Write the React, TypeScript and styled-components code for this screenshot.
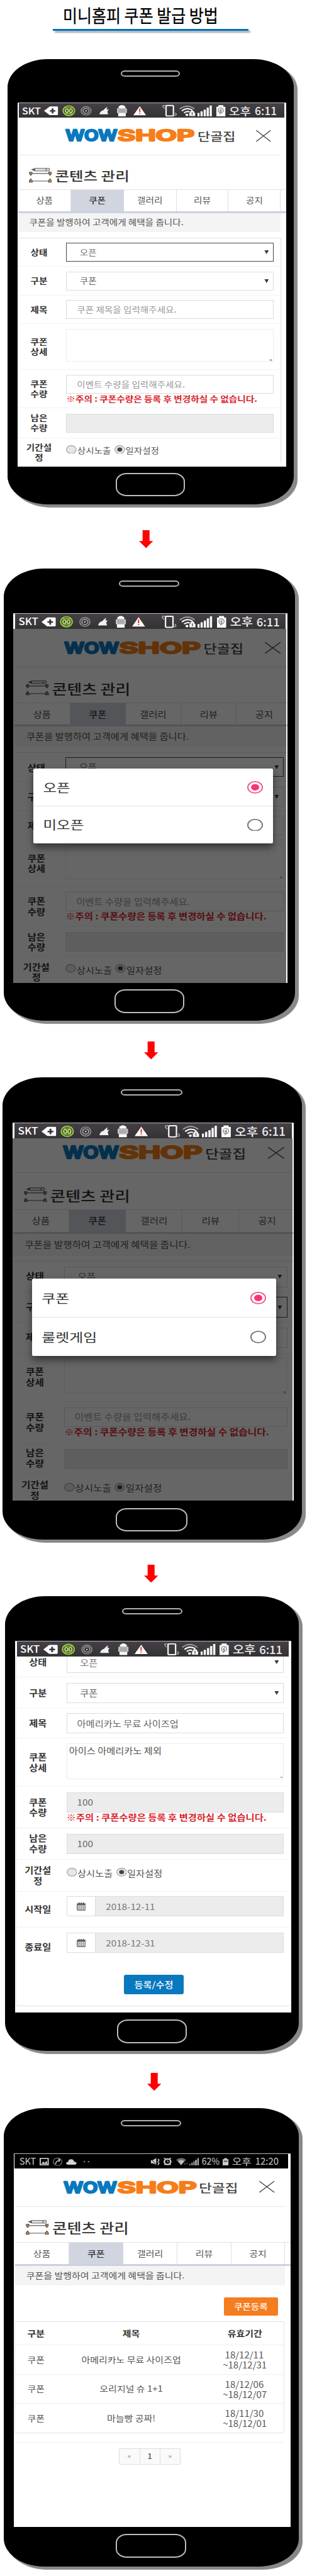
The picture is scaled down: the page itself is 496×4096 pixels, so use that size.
import React from "react";
import styled, { createGlobalStyle, ThemeProvider, css } from "styled-components";

/* ---------- base ---------- */

const Global = createGlobalStyle`
  * { box-sizing: border-box; }
  html, body { margin: 0; padding: 0; background: #fff; }
  body { font-family: "Noto Sans CJK KR", "Noto Sans", sans-serif; color: #444; overflow-x: hidden; }
  svg { display: block; flex: none; }
`;

const Page = styled.main`
  width: 652px;
  height: 5386px;
  zoom: 0.7605;
  display: flex;
  flex-direction: column;
  align-items: flex-start;
  overflow: hidden;
`;

type TextProps = { $size?: number; $sy?: number; $weight?: number; $color?: string; $line?: number };

const Text = styled.div<TextProps>`
  font-size: ${(p) => (p.$size ?? 1) * (p.theme as any).k}px;
  font-weight: ${(p) => p.$weight ?? 400};
  color: ${(p) => p.$color ?? "#555"};
  line-height: ${(p) => p.$line ?? 22}px;
  white-space: nowrap;
  transform: scaleY(${(p) => p.$sy ?? 0.87});
`;

/* ---------- title ---------- */

const TitleBlock = styled.header`
  height: 66px;
  flex: none;
  padding: 6px 0 0 110px;
`;
const Title = styled.h1`
  margin: 0 0 0 22px;
  width: max-content;
  font-size: 38px;
  line-height: 48px;
  font-weight: 400;
  color: #000;
  -webkit-text-stroke: 0.4px #000;
  white-space: nowrap;
  transform: scaleX(0.866);
  transform-origin: left center;
`;
const TitleRule = styled.div`
  width: 409px;
  height: 4px;
  margin-top: 6px;
  background: #0070c0;
  box-shadow: 4px 4px 3px rgba(0, 0, 0, 0.35);
`;

/* ---------- phone frame ---------- */

type Box = [left: number, right: number, top: number, bottom: number];

const Body = styled.section<{ $x: number; $w: number; $h: number; $mt: number }>`
  flex: none;
  margin-left: ${(p) => p.$x}px;
  margin-top: ${(p) => p.$mt}px;
  width: ${(p) => p.$w}px;
  height: ${(p) => p.$h}px;
  background: #000;
  border-radius: 84px / 59px;
  box-shadow: 7px 6px 1px #888;
  display: flex;
  flex-direction: column;
  align-items: flex-start;
`;
const Part = css<{ $x: number; $w: number; $h: number; $mt: number }>`
  flex: none;
  margin-left: ${(p) => p.$x}px;
  margin-top: ${(p) => p.$mt}px;
  width: ${(p) => p.$w}px;
  height: ${(p) => p.$h}px;
`;
const Earpiece = styled.div<{ $x: number; $w: number; $h: number; $mt: number }>`
  ${Part}
  border: 3px solid #b0b0b0;
  border-radius: 9px / 7px;
`;
const HomeButton = styled.div<{ $x: number; $w: number; $h: number; $mt: number }>`
  ${Part}
  border: 3px solid #bdbdbd;
  border-radius: 23px / 18px;
`;
const Screen = styled.div<{ $x: number; $w: number; $h: number; $mt: number }>`
  ${Part}
  position: relative;
  overflow: hidden;
  background: #fff;
  border-top: 2px solid #bdb9bd;
`;

interface PhoneSpec {
  prev: number;
  body: Box;
  ear: Box;
  screen: Box;
  home: Box;
  k: number;
}

const part = (b: Box, left: number, above: number) => ({
  $x: b[0] - left,
  $w: b[1] - b[0],
  $h: b[3] - b[2],
  $mt: b[2] - above,
});

function Phone({ spec, children }: { spec: PhoneSpec; children: React.ReactNode }) {
  const { body, ear, screen, home, prev, k } = spec;
  return (
    <ThemeProvider theme={{ k }}>
      <Body {...part(body, 0, prev)}>
        <Earpiece {...part(ear, body[0], body[2])} />
        <Screen {...part(screen, body[0], ear[3])}>{children}</Screen>
        <HomeButton {...part(home, body[0], screen[3])} />
      </Body>
    </ThemeProvider>
  );
}

const ArrowWrap = styled.div<{ $x: number; $mt: number }>`
  flex: none;
  margin-left: ${(p) => p.$x}px;
  margin-top: ${(p) => p.$mt}px;
`;
function Arrow({ x, mt, h = 37.5 }: { x: number; mt: number; h?: number }) {
  return (
    <ArrowWrap $x={x} $mt={mt}>
      <svg width="29.5" height={h} viewBox="0 0 71 104" preserveAspectRatio="none">
        <path d="M18 0H53V63H71L35.5 104L0 63H18Z" fill="#ff0000" />
      </svg>
    </ArrowWrap>
  );
}

/* ---------- status bar ---------- */

const Bar = styled.div<{ $ml: number; $w: number; $h: number; $dark?: boolean }>`
  margin-left: ${(p) => p.$ml}px;
  width: ${(p) => p.$w}px;
  height: ${(p) => p.$h}px;
  display: flex;
  align-items: stretch;
  background: ${(p) => (p.$dark ? "#000" : "linear-gradient(#444045, #353236)")};
`;
const Slot = styled.div<{ $gap: number; $w: number; $of: number }>`
  flex: 0 0 ${(p) => (p.$w / p.$of) * 100}%;
  margin-left: ${(p) => (p.$gap / p.$of) * 100}%;
  display: flex;
  align-items: center;
  svg { width: 100%; height: 100%; overflow: visible; }
`;
const Glyph = ({ w, children }: { w: number; children: React.ReactNode }) => (
  <svg viewBox={`0 0 ${w} 85`} preserveAspectRatio="none">{children}</svg>
);

function StatusBar({ ml, w, h }: { ml: number; w: number; h: number }) {
  const n = 1334;
  return (
    <Bar $ml={ml} $w={w} $h={h}>
      <Slot $gap={17} $w={92} $of={n}>
        <Text $size={1.1} $weight={500} $color="#fff" $sy={0.9}>SKT</Text>
      </Slot>
      <Slot $gap={17} $w={70} $of={n}>
        <Glyph w={70}>
          <path d="M0 46L26 22Q28 20 32 20H66Q70 20 70 24V67Q70 71 66 71H32Q28 71 26 69Z" fill="#fff" />
          <path d="M43 31V61M29 46H57" stroke="#3a373b" strokeWidth="9" />
        </Glyph>
      </Slot>
      <Slot $gap={20} $w={67} $of={n}>
        <Glyph w={67}>
          <circle cx="33" cy="45" r="29" fill="#4c5a33" stroke="#9bd137" strokeWidth="6" />
          <path d="M14 27H52M14 63H52" stroke="#9bd137" strokeWidth="4" />
          <ellipse cx="23" cy="45" rx="7" ry="11" fill="none" stroke="#c6e88a" strokeWidth="5" />
          <ellipse cx="43" cy="45" rx="7" ry="11" fill="none" stroke="#c6e88a" strokeWidth="5" />
        </Glyph>
      </Slot>
      <Slot $gap={27} $w={56} $of={n}>
        <Glyph w={56}>
          <circle cx="28" cy="46" r="25" fill="none" stroke="#a9a7a9" strokeWidth="4" />
          <circle cx="28" cy="46" r="15" fill="none" stroke="#a9a7a9" strokeWidth="5" />
          <circle cx="28" cy="46" r="4" fill="#ddd" />
        </Glyph>
      </Slot>
      <Slot $gap={38} $w={47} $of={n}>
        <Glyph w={47}>
          <path d="M0 66Q4 46 20 42L28 32L40 22L36 38L47 36L40 50L44 66Z" fill="#f0f0f0" />
        </Glyph>
      </Slot>
      <Slot $gap={41} $w={50} $of={n}>
        <Glyph w={50}>
          <path d="M8 30V20Q8 17 14 17L18 12H32L36 17Q42 17 42 20V30ZM6 60H44V78H6Z" fill="#fff" />
          <rect x="0" y="30" width="50" height="30" rx="5" fill="#c4c4c4" />
          <path d="M8 38H42M8 45H42M8 52H42" stroke="#8d8d8d" strokeWidth="3" />
        </Glyph>
      </Slot>
      <Slot $gap={31} $w={64} $of={n}>
        <Glyph w={64}>
          <path d="M32 19L64 72H0Z" fill="#fff" />
          <path d="M32 32V53M32 58V64" stroke="#f0442c" strokeWidth="7" />
        </Glyph>
      </Slot>
      <Slot $gap={82} $w={72} $of={n}>
        <Glyph w={72}>
          <rect x="19" y="14" width="37" height="62" rx="5" fill="none" stroke="#f4f4f4" strokeWidth="7" />
          <path d="M12 32Q0 22 4 14H16M60 72Q72 76 70 64L64 58" fill="none" stroke="#aaa" strokeWidth="5" />
        </Glyph>
      </Slot>
      <Slot $gap={14} $w={84} $of={n}>
        <Glyph w={84}>
          <path d="M3 34Q40 2 76 34" fill="none" stroke="#aaa" strokeWidth="6" />
          <path d="M13 46Q40 22 66 42" fill="none" stroke="#fff" strokeWidth="7" />
          <path d="M24 58Q38 45 52 52" fill="none" stroke="#fff" strokeWidth="7" />
          <circle cx="38" cy="69" r="7" fill="#fff" />
          <path d="M50 76V57H55V50Q65 36 75 50V57H80V76Z" fill="#f4f4f4" />
          <path d="M65 54V70" stroke="#666" strokeWidth="5" />
        </Glyph>
      </Slot>
      <Slot $gap={7} $w={72} $of={n}>
        <Glyph w={72}>
          <path d="M0 78V58H10V78ZM15 78V48H26V78ZM31 78V38H42V78ZM46 78V26H57V78ZM61 78V14H72V78Z" fill="#f6f6f6" />
        </Glyph>
      </Slot>
      <Slot $gap={23} $w={45} $of={n}>
        <Glyph w={45}>
          <path d="M0 21H10V12H35V21H45V78H0Z" fill="#fff" />
          <ellipse cx="22" cy="43" rx="13" ry="15" fill="none" stroke="#777" strokeWidth="4" />
          <path d="M26 34L17 46H25L17 66" fill="none" stroke="#777" strokeWidth="4" />
        </Glyph>
      </Slot>
      <Slot $gap={19} $w={113} $of={n}>
        <Text $size={1.3} $weight={500} $color="#eee" $sy={0.85}>오후</Text>
      </Slot>
      <Slot $gap={17} $w={116} $of={n}>
        <Text $size={1.2} $weight={500} $color="#eee" $sy={0.98}>6:11</Text>
      </Slot>
    </Bar>
  );
}

function NightStatusBar({ ml, w, h }: { ml: number; w: number; h: number }) {
  const n = 1376;
  return (
    <Bar $ml={ml} $w={w} $h={h} $dark>
      <Slot $gap={26} $w={80} $of={n}>
        <Text $size={0.96} $color="#ccc" $sy={1.02}>SKT</Text>
      </Slot>
      <Slot $gap={17} $w={46} $of={n}>
        <Glyph w={46}>
          <rect x="3" y="26" width="40" height="37" fill="none" stroke="#ccc" strokeWidth="6" />
          <path d="M8 58L18 44L26 52L34 40L40 58Z" fill="#ccc" />
        </Glyph>
      </Slot>
      <Slot $gap={21} $w={49} $of={n}>
        <Glyph w={49}>
          <circle cx="24" cy="45" r="22" fill="none" stroke="#777" strokeWidth="4" />
          <path d="M14 60Q14 40 34 36M26 28L36 34L30 46" fill="none" stroke="#ccc" strokeWidth="5" />
        </Glyph>
      </Slot>
      <Slot $gap={17} $w={53} $of={n}>
        <Glyph w={53}>
          <path d="M8 62Q0 60 0 54Q2 46 10 46Q12 30 26 30Q38 30 40 44Q53 46 53 55Q52 61 44 62Z" fill="#d4d4d4" />
        </Glyph>
      </Slot>
      <Slot $gap={36} $w={30} $of={n}>
        <Glyph w={30}>
          <circle cx="4" cy="45" r="4" fill="#999" />
          <circle cx="25" cy="45" r="4" fill="#999" />
        </Glyph>
      </Slot>
      <Slot $gap={307} $w={49} $of={n}>
        <Glyph w={49}>
          <path d="M3 36H12L30 24V64L12 54H3Z" fill="#ccc" />
          <path d="M2 26L32 66" stroke="#000" strokeWidth="3" />
          <path d="M38 28L44 36L38 46L44 54L38 64" fill="none" stroke="#ccc" strokeWidth="5" />
        </Glyph>
      </Slot>
      <Slot $gap={17} $w={40} $of={n}>
        <Glyph w={40}>
          <path d="M2 26H10M30 26H38M4 64L10 58M36 64L30 58" stroke="#ccc" strokeWidth="6" />
          <circle cx="20" cy="45" r="16" fill="none" stroke="#ccc" strokeWidth="8" />
          <path d="M20 36V46H28" fill="none" stroke="#ccc" strokeWidth="3" />
        </Glyph>
      </Slot>
      <Slot $gap={23} $w={54} $of={n}>
        <Glyph w={54}>
          <path d="M0 34Q26 12 50 34L25 66Z" fill="#6c6c6c" />
          <path d="M10 42Q26 28 41 42L25 64Z" fill="#bbb" />
          <path d="M44 52V62M54 50V60" stroke="#666" strokeWidth="4" />
        </Glyph>
      </Slot>
      <Slot $gap={13} $w={47} $of={n}>
        <Glyph w={47}>
          <path d="M0 66V58H6V66ZM10 66V50H17V66ZM20 66V42H27V66Z" fill="#999" />
          <path d="M30 66V34H37V66ZM41 66V24H47V66Z" fill="#ccc" />
        </Glyph>
      </Slot>
      <Slot $gap={15} $w={92} $of={n}>
        <Text $size={0.93} $color="#ccc" $sy={1.08}>62%</Text>
      </Slot>
      <Slot $gap={14} $w={29} $of={n}>
        <Glyph w={29}>
          <path d="M0 30H8V24H21V30H29V66H0Z" fill="#ccc" />
          <path d="M5 42H24" stroke="#444" strokeWidth="6" />
        </Glyph>
      </Slot>
      <Slot $gap={18} $w={96} $of={n}>
        <Text $size={1.11} $color="#ccc" $sy={0.84}>오후</Text>
      </Slot>
      <Slot $gap={19} $w={122} $of={n}>
        <Text $size={1} $color="#ccc" $sy={1.02}>12:20</Text>
      </Slot>
    </Bar>
  );
}

/* ---------- site header, heading, tabs ---------- */

const SiteHeader = styled.div<{ $h: number; $pb: number; $w: number }>`
  height: ${(p) => p.$h}px;
  width: ${(p) => p.$w}px;
  padding-bottom: ${(p) => p.$pb}px;
  border-bottom: 2px solid #e6e6e6;
  display: flex;
  align-items: center;
`;
const LogoCell = styled.div<{ $ml: number; $w: number; $h: number; $drop?: number }>`
  flex: none;
  margin-left: ${(p) => p.$ml}px;
  width: ${(p) => p.$w}px;
  height: ${(p) => p.$h}px;
  display: flex;
  align-items: center;
  padding-top: ${(p) => p.$drop ?? 0}px;
  svg { width: 100%; height: 100%; overflow: visible; }
`;

function Logo() {
  const letters = {
    fontFamily: "Inter, sans-serif",
    fontSize: 90,
    fontWeight: 600,
    strokeWidth: 9,
    strokeLinejoin: "round" as const,
    lengthAdjust: "spacingAndGlyphs",
  };
  return (
    <svg viewBox="0 0 643 79" preserveAspectRatio="none">
      <text x="1" y="72" textLength="259" fill="#0a78be" stroke="#0a78be" {...letters}>WOW</text>
      <text x="262" y="72" textLength="386" fill="#f67d18" stroke="#f67d18" {...letters}>SHOP</text>
    </svg>
  );
}

const HeadingRow = styled.div<{ $h: number; $pl: number; $drop: number }>`
  height: ${(p) => p.$h}px;
  padding: ${(p) => p.$drop}px 0 0 ${(p) => p.$pl}px;
  display: flex;
  align-items: flex-start;
  gap: 7px;
`;

const ContentIcon = () => (
  <svg width="48" height="31" viewBox="0 0 112 86" preserveAspectRatio="none">
    <path d="M14 10L30 2H98Q102 10 98 18H30Z" fill="#d9d9d9" stroke="#777" strokeWidth="4" />
    <path d="M14 10L30 3V17Z" fill="#555" />
    <path d="M84 2V18" stroke="#777" strokeWidth="5" />
    <path d="M10 32H102M10 76H102" stroke="#777" strokeWidth="5" />
    <g fill="#c98a4a" stroke="#555" strokeWidth="4">
      <path d="M3 25H15V35L9 43L3 35Z" />
      <path d="M97 25H109V35L103 43L97 35Z" />
      <path d="M9 64L16 74V83H2V74Z" />
      <path d="M103 64L110 74V83H96V74Z" />
    </g>
  </svg>
);

const Tabs = styled.nav<{ $cols: string; $h: number }>`
  display: grid;
  grid-template-columns: ${(p) => p.$cols};
  height: ${(p) => p.$h}px;
  border-top: 1.5px solid #e2e2e2;
  border-bottom: 4px solid #ccd1df;
`;
const Tab = styled.div<{ $on?: boolean }>`
  display: flex;
  align-items: center;
  justify-content: center;
  border-right: 1.5px solid ${(p) => (p.$on ? "#d0d5df" : "#e0e0e0")};
  background: ${(p) => (p.$on ? "#d0d5df" : "#fff")};
`;
const Notice = styled.div<{ $h: number; $w: number; $pl: number }>`
  height: ${(p) => p.$h}px;
  width: ${(p) => p.$w}px;
  padding: 0 0 1px ${(p) => p.$pl}px;
  display: flex;
  align-items: center;
  background: #f4f4f4;
`;

interface TopSpec {
  left: number;
  barBottom: number;
  logo: [number, number];
  logoH: number;
  name: number;
  close: [number, number];
  pb: number;
  rule: number;
  right: number;
  icon: [number, number];
  tabs: number[];
  tabTop: number;
  tabBottom: number;
  noticeBottom: number;
  noticeX: number;
}

const TAB_NAMES = ["상품", "쿠폰", "갤러리", "리뷰", "공지"];

const Pad = styled.div<{ $ml: number }>`
  padding-left: ${(p) => p.$ml}px;
`;

function PageTop({ t, screenX }: { t: TopSpec; screenX: number }) {
  const cols = t.tabs.slice(1).map((x, i) => `${x - t.tabs[i]}px`).join(" ");
  return (
    <Pad $ml={t.left - screenX}>
      <SiteHeader $h={t.rule - t.barBottom + 1} $pb={t.pb} $w={t.right - t.left}>
        <LogoCell $ml={t.logo[0] - t.left} $w={t.logo[1] - t.logo[0]} $h={t.logoH}>
          <Logo />
        </LogoCell>
        <LogoCell $ml={t.name - t.logo[1] - 1} $w={80} $h={30} $drop={3}>
          <Text $size={1.5} $weight={500} $color="#444" $sy={0.82} $line={30}>단골집</Text>
        </LogoCell>
        <LogoCell $ml={t.close[0] - t.name - 79} $w={t.close[1] - t.close[0]} $h={24}>
          <svg viewBox="0 0 75 68" preserveAspectRatio="none">
            <path d="M1 1L74 67M74 1L1 67" stroke="#444" strokeWidth="4" />
          </svg>
        </LogoCell>
      </SiteHeader>
      <HeadingRow $h={t.tabTop - t.rule - 1} $pl={t.icon[0] - t.left} $drop={t.icon[1] - t.rule}>
        <ContentIcon />
        <Text $size={1.68} $weight={500} $color="#333" $sy={0.84} $line={34}>콘텐츠 관리</Text>
      </HeadingRow>
      <Tabs $cols={cols} $h={t.tabBottom - t.tabTop}>
        {TAB_NAMES.map((n, i) => (
          <Tab key={n} $on={i === 1}>
            <Text $weight={i === 1 ? 500 : 400} $color={i === 1 ? "#333" : "#555"}>{n}</Text>
          </Tab>
        ))}
      </Tabs>
      <Notice $h={t.noticeBottom - t.tabBottom} $w={t.right - t.left} $pl={t.noticeX - t.left}>
        <Text $color="#555">쿠폰을 발행하여 고객에게 혜택을 줍니다.</Text>
      </Notice>
    </Pad>
  );
}

/* ---------- form ---------- */

const FormBox = styled.div<{ $ml: number; $mt: number; $w: number; $h: number; $side?: boolean; $noTop?: boolean; $foot?: boolean }>`
  margin-left: ${(p) => p.$ml}px;
  margin-top: ${(p) => p.$mt}px;
  width: ${(p) => p.$w}px;
  height: ${(p) => p.$h}px;
  border: 0 solid #e2e2e2;
  border-top-width: ${(p) => (p.$noTop ? 0 : 2)}px;
  border-right-width: ${(p) => (p.$side ? 2 : 0)}px;
  border-bottom-width: ${(p) => (p.$foot ? 2 : 0)}px;
  ${(p) => p.$foot && "border-left-width: 1px; border-radius: 0 0 4px 4px;"}
`;
const Row = styled.div<{ $h: number; $cols: string; $line?: boolean }>`
  display: grid;
  grid-template-columns: ${(p) => p.$cols};
  height: ${(p) => p.$h}px;
  border-bottom: ${(p) => (p.$line === false ? 0 : 1.5)}px solid #f2f2f2;
`;
const Label = styled.div`
  display: flex;
  flex-direction: column;
  align-items: center;
  justify-content: center;
`;
const Cell = styled.div<{ $pt: number }>`
  grid-column: 3;
  padding-top: ${(p) => p.$pt}px;
`;
const Field = styled.div<{ $h: number; $pl?: number; $tone?: "focus" | "soft" | "off" }>`
  height: ${(p) => p.$h}px;
  padding: 0 9px 0 ${(p) => p.$pl ?? 21}px;
  border: 1.5px solid
    ${(p) => (p.$tone === "focus" ? "#484848" : p.$tone === "soft" ? "#ececec" : "#d8dce0")};
  background: ${(p) => (p.$tone === "off" ? "#ececec" : "#fff")};
  display: flex;
  align-items: center;
  justify-content: space-between;
`;
const Area = styled(Field)`
  position: relative;
  align-items: flex-start;
  padding-top: 3px;
  &::after {
    content: "";
    position: absolute;
    right: 2px;
    bottom: 1px;
    width: 4px;
    height: 3px;
    background: #aaa;
  }
`;
const DateField = styled.div<{ $h: number }>`
  height: ${(p) => p.$h}px;
  display: grid;
  grid-template-columns: 60px 1fr;
  border: 1.5px solid #d8dce4;
`;
const DateIcon = styled.div`
  display: flex;
  align-items: center;
  justify-content: center;
  border-right: 1.5px solid #d8dce4;
`;
const DateValue = styled.div`
  display: flex;
  align-items: center;
  padding-left: 21px;
  background: #ececec;
`;
const Choices = styled.div`
  display: flex;
  align-items: center;
  height: 26px;
`;
const ChoiceText = styled.div<{ $mr?: number }>`
  margin: 5px ${(p) => p.$mr ?? 0}px 0 1px;
`;

const Caret = () => (
  <svg width="10" height="8" viewBox="0 0 10 8">
    <path d="M0.5 0H9.5L5 8Z" fill="#3a3a3a" />
  </svg>
);
const Calendar = () => (
  <svg width="19" height="17" viewBox="0 0 46 48" preserveAspectRatio="none">
    <rect x="2" y="7" width="42" height="39" rx="4" fill="#ddd" stroke="#666" strokeWidth="4" />
    <path d="M2 7H44V17H2Z" fill="#666" />
    <path d="M12 0V12M23 0V12M34 0V12" stroke="#555" strokeWidth="5" />
    <path d="M12 18V46M23 18V46M34 18V46M3 27H43M3 37H43" stroke="#888" strokeWidth="2.5" />
  </svg>
);
const SmallRadio = ({ on }: { on?: boolean }) => (
  <svg width="22" height="18" viewBox="0 0 52 42" preserveAspectRatio="none">
    <ellipse cx="26" cy="21" rx="24" ry="19.5" fill="#e6e6e6" stroke="#999" strokeWidth="3.5" />
    {on && <ellipse cx="26" cy="21" rx="12" ry="10" fill="#444" />}
  </svg>
);

const LabelText = ({ lines, line }: { lines: string[]; line: number }) => (
  <Label>
    {lines.map((l, i) => (
      <Text key={i} $weight={700} $color="#333" $line={line}>{l}</Text>
    ))}
  </Label>
);

interface FormSpec {
  left: number;
  right: number;
  start: number;
  top: number;
  end: number;
  bounds: number[];
  boxes: [number, number][];
  boxX: [number, number];
  labelX: number;
  line: number;
  radioY: number;
  focus?: number;
  side?: boolean;
  scrolled?: boolean;
  filled?: boolean;
}

const LABELS = [["상태"], ["구분"], ["제목"], ["쿠폰", "상세"], ["쿠폰", "수량"], ["남은", "수량"], ["기간설", "정"], ["시작일"], ["종료일"]];

function CouponForm({ f, screenX }: { f: FormSpec; screenX: number }) {
  const lw = (f.labelX - f.left) * 2;
  const cols = `${lw}px ${f.boxX[0] - f.left - lw}px ${f.boxX[1] - f.boxX[0]}px`;
  const h = (i: number) => f.boxes[i][1] - f.boxes[i][0];
  const cell = (i: number) => {
    if (i < 2)
      return (
        <Field $h={h(i)} $pl={27} $tone={f.focus === i ? "focus" : undefined}>
          <Text $color={i ? "#666" : "#777"}>{i ? "쿠폰" : "오픈"}</Text>
          <Caret />
        </Field>
      );
    if (i === 2)
      return (
        <Field $h={h(i)}>
          <Text $color={f.filled ? "#666" : "#999"}>{f.filled ? "아메리카노 무료 사이즈업" : "쿠폰 제목을 입력해주세요."}</Text>
        </Field>
      );
    if (i === 3)
      return (
        <Area $h={h(i)} $pl={4} $tone="soft">
          <Text $color="#555">{f.filled ? "아이스 아메리카노 제외" : ""}</Text>
        </Area>
      );
    if (i === 4)
      return (
        <>
          <Field $h={h(i)} $tone={f.filled ? "off" : undefined}>
            <Text $color={f.filled ? "#666" : "#999"}>{f.filled ? "100" : "이벤트 수량을 입력해주세요."}</Text>
          </Field>
          <Text $weight={700} $color="#d8262c" $line={20} $size={1.005}>
            ※주의 : 쿠폰수량은 등록 후 변경하실 수 없습니다.
          </Text>
        </>
      );
    if (i === 5)
      return (
        <Field $h={h(i)} $tone="off">
          <Text $color="#666">{f.filled ? "100" : ""}</Text>
        </Field>
      );
    if (i === 6)
      return (
        <Choices>
          <SmallRadio />
          <ChoiceText $mr={7}><Text>상시노출</Text></ChoiceText>
          <SmallRadio on />
          <ChoiceText><Text>일자설정</Text></ChoiceText>
        </Choices>
      );
    return (
      <DateField $h={h(i)}>
        <DateIcon><Calendar /></DateIcon>
        <DateValue><Text $color="#777">{i === 7 ? "2018-12-11" : "2018-12-31"}</Text></DateValue>
      </DateField>
    );
  };
  return (
    <FormBox
      $ml={f.left - screenX}
      $mt={f.top - f.start}
      $w={f.right - f.left}
      $h={f.end - f.top}
      $side={f.side}
      $noTop={f.scrolled}
      $foot={f.filled}
    >
      {f.bounds.slice(0, -1).map((b, i) => {
        const top = i === 0 && !f.scrolled ? b + 2 : b;
        const rowTop = i === 6 ? f.radioY - 13 : f.boxes[i][0];
        return (
          <Row key={i} $h={f.bounds[i + 1] - top} $cols={cols} $line={i < f.bounds.length - 2}>
            <LabelText lines={LABELS[i]} line={f.line} />
            <Cell $pt={rowTop - top}>{cell(i)}</Cell>
          </Row>
        );
      })}
      {f.filled && (
        <Submit>
          <Text $color="#fff" $weight={500}>등록/수정</Text>
        </Submit>
      )}
    </FormBox>
  );
}

const Submit = styled.div`
  width: 125.5px;
  height: 40px;
  margin: 20px 0 0 224.5px;
  border-radius: 4px;
  background: #0879bf;
  display: flex;
  align-items: center;
  justify-content: center;
`;

/* ---------- option dialog ---------- */

const Dim = styled.div<{ $top: number; $right: number }>`
  position: absolute;
  left: 0;
  right: ${(p) => p.$right}px;
  top: ${(p) => p.$top}px;
  bottom: 0;
  background: rgba(0, 0, 0, 0.6);
`;
const Dialog = styled.div<{ $x: number; $y: number; $w: number; $h: number }>`
  position: absolute;
  left: ${(p) => p.$x}px;
  top: ${(p) => p.$y}px;
  width: ${(p) => p.$w}px;
  height: ${(p) => p.$h}px;
  display: grid;
  grid-template-rows: 1fr 1fr;
  border-radius: 3px;
  background: #fff;
  box-shadow: 0 9px 16px rgba(0, 0, 0, 0.45);
`;
const Option = styled.div`
  display: flex;
  align-items: center;
  justify-content: space-between;
  padding: 0 21px 0 20px;
  & + & { border-top: 1.5px solid #e4e4e4; }
`;
const Radio = ({ on }: { on?: boolean }) => (
  <svg width="33" height="26" viewBox="0 0 78 70" preserveAspectRatio="none">
    <ellipse cx="39" cy="35" rx="36" ry="32" fill="none" stroke={on ? "#f0558e" : "#757575"} strokeWidth="6" />
    {on && <ellipse cx="39" cy="35" rx="20" ry="18" fill="#fa3278" />}
  </svg>
);

function OptionDialog({ box, screen, barBottom, options }: { box: Box; screen: Box; barBottom: number; options: string[] }) {
  const y0 = screen[2] + 2;
  return (
    <>
      <Dim $top={barBottom - y0} $right={2} />
      <Dialog $x={box[0] - screen[0]} $y={box[2] - y0} $w={box[1] - box[0]} $h={box[3] - box[2]}>
        {options.map((o, i) => (
          <Option key={o}>
            <Text $size={1.53} $color="#333" $sy={0.82} $line={32}>{o}</Text>
            <Radio on={i === 0} />
          </Option>
        ))}
      </Dialog>
    </>
  );
}

/* ---------- coupon list ---------- */

const ListActions = styled.div`
  height: 74px;
  width: 565px;
  margin-left: 1px;
  padding: 24.6px 14px 0 0;
  display: flex;
  justify-content: flex-end;
`;
const AddButton = styled.div`
  width: 113px;
  height: 38px;
  border-radius: 3px;
  background: #f47d20;
  display: flex;
  align-items: center;
  justify-content: center;
`;
const List = styled.div`
  width: 565px;
  margin-left: 1px;
  border: 1.5px solid #e2e2e2;
  border-top-width: 2px;
  border-bottom-width: 2px;
  border-radius: 0 0 3px 3px;
`;
const ListRow = styled.div<{ $h: number }>`
  height: ${(p) => p.$h}px;
  display: grid;
  grid-template-columns: 88px 310px 165px;
  align-items: center;
  justify-items: center;
  & + & { border-top: 1.5px solid #efefef; }
`;
const PagerArea = styled.div`
  width: 565px;
  margin: 18px 0 0 1px;
  padding-top: 12px;
  border-top: 1.5px solid #f0f0f0;
  display: flex;
  justify-content: center;
`;
const Pager = styled.div`
  display: grid;
  grid-template-columns: 42px 42px 42px;
  height: 34px;
  border: 1.5px solid #ddd;
  border-radius: 3px 0 0 3px;
  background: #fafafa;
`;
const PagerCell = styled.div`
  display: flex;
  align-items: center;
  justify-content: center;
  & + & { border-left: 1.5px solid #ddd; }
`;

const COUPONS = [
  { title: "아메리카노 무료 사이즈업", from: "18/12/11", to: "~18/12/31" },
  { title: "오리지널 슈 1+1", from: "18/12/06", to: "~18/12/07" },
  { title: "마늘빵 공짜!", from: "18/11/30", to: "~18/12/01" },
];

function CouponList() {
  return (
    <>
      <ListActions>
        <AddButton><Text $color="#fff" $weight={500} $size={0.97}>쿠폰등록</Text></AddButton>
      </ListActions>
      <List>
        <ListRow $h={48}>
          {["구분", "제목", "유효기간"].map((h) => (
            <Text key={h} $weight={700} $color="#333">{h}</Text>
          ))}
        </ListRow>
        {COUPONS.map((c) => (
          <ListRow key={c.from} $h={61.3}>
            <Text>쿠폰</Text>
            <Text>{c.title}</Text>
            <div>
              <Text $line={20.8} $sy={0.95}>&nbsp;{c.from}</Text>
              <Text $line={20.8} $sy={0.95}>{c.to}</Text>
            </div>
          </ListRow>
        ))}
      </List>
      <PagerArea>
        <Pager>
          <PagerCell><Text $size={0.8} $color="#888">«</Text></PagerCell>
          <PagerCell><Text $size={0.9} $weight={500}>1</Text></PagerCell>
          <PagerCell><Text $size={0.8} $color="#888">»</Text></PagerCell>
        </Pager>
      </PagerArea>
    </>
  );
}

/* ---------- measurements of each step ---------- */

const P1: PhoneSpec = { prev: 66, body: [15.5, 614.5, 123, 1054], ear: [253, 376, 147.5, 161], screen: [36.5, 598, 215, 976], home: [242.5, 386.5, 989, 1037], k: 19.2 };
const P2: PhoneSpec = { prev: 1146, body: [7.5, 617, 1189, 2134.6], ear: [249, 375, 1213.5, 1227], screen: [28, 600.5, 1282.5, 2055], home: [238.7, 385, 2069, 2118], k: 20.2 };
const P3: PhoneSpec = { prev: 2215, body: [5, 631, 2252, 3219.6], ear: [253, 382, 2277, 2291], screen: [26, 614, 2347, 3137.5], home: [242.5, 392.5, 3153, 3202.5], k: 20.6 };
const P4: PhoneSpec = { prev: 3308.5, body: [11, 625, 3337.5, 4288.5], ear: [254.5, 381, 3362.5, 3376], screen: [32, 609, 3431, 4208], home: [244.5, 391, 4223, 4272], k: 20.1 };
const P5: PhoneSpec = { prev: 4371.5, body: [8, 624, 4408, 5365.8], ear: [252, 379, 4433, 4446], screen: [29, 607, 4502.5, 5283.6], home: [241.6, 389.6, 5298, 5347.7], k: 19.7 };

const T1: TopSpec = { left: 38, barBottom: 247, logo: [137, 404.6], logoH: 28, name: 414, close: [535, 566], pb: 1, rule: 324, right: 587, icon: [60, 351], tabs: [38, 149, 259, 369, 478, 587], tabTop: 396, tabBottom: 446, noticeBottom: 486, noticeX: 61 };
const T2: TopSpec = { left: 30, barBottom: 1316, logo: [134, 417], logoH: 28.5, name: 426.5, close: [554, 587], pb: 0, rule: 1395, right: 600, icon: [54, 1423], tabs: [30, 147, 263, 379, 495, 611], tabTop: 1470, tabBottom: 1520, noticeBottom: 1561, noticeX: 55 };
const T3: TopSpec = { left: 27, barBottom: 2381, logo: [132, 421], logoH: 31, name: 430, close: [560, 594], pb: 11, rule: 2452, right: 613, icon: [50, 2482], tabs: [27, 145, 263.5, 382, 500, 618], tabTop: 2529, tabBottom: 2581, noticeBottom: 2627, noticeX: 51.5 };
const T5: TopSpec = { left: 31, barBottom: 4535, logo: [132.6, 408.7], logoH: 28.5, name: 417, close: [542, 574], pb: 1, rule: 4613.6, right: 595.5, icon: [54.5, 4642], tabs: [31, 145, 258, 371, 484, 595.5], tabTop: 4688, tabBottom: 4739, noticeBottom: 4780, noticeX: 55 };

const F1: FormSpec = {
  left: 38, right: 587.5, start: 486, top: 497.5, end: 968, side: true, focus: 0,
  bounds: [497.5, 558.6, 619, 678.6, 774.5, 855, 917.6, 976],
  boxes: [[509, 549], [569, 609], [629, 668.5], [688.7, 758], [785, 825], [866.6, 906]],
  boxX: [138.5, 572], labelX: 81.5, line: 21.3, radioY: 941,
};
const F2: FormSpec = {
  left: 30, right: 600, start: 1561, top: 1574, end: 2055, focus: 0,
  bounds: [1574, 1636.4, 1697, 1758, 1855, 1938, 2003, 2063],
  boxes: [[1585, 1626], [1646.5, 1688], [1707, 1748], [1768, 1840], [1866, 1907.5], [1950, 1991]],
  boxX: [137, 593], labelX: 76, line: 21.3, radioY: 2027,
};
const F3: FormSpec = {
  left: 27, right: 613, start: 2627, top: 2637, end: 3137, focus: 1,
  bounds: [2637, 2703, 2767, 2831, 2933.6, 3020, 3083.5, 3152],
  boxes: [[2650, 2693], [2713.5, 2756], [2777, 2819], [2840, 2916], [2944, 2985.7], [3031, 3073.5]],
  boxX: [134, 600.5], labelX: 73, line: 22.3, radioY: 3111,
};
const F4: FormSpec = {
  left: 33, right: 607.5, start: 3464, top: 3444.3, end: 4196, scrolled: true, filled: true,
  bounds: [3444.3, 3508, 3572, 3635, 3736.8, 3823, 3888.6, 3955.7, 4031.4, 4110],
  boxes: [[3455.5, 3498], [3519, 3561.5], [3582.5, 3625], [3646, 3720.7], [3748, 3790], [3835, 3877], [0, 0], [3966, 4008], [4042, 4084]],
  boxX: [137.6, 592], labelX: 78, line: 22.2, radioY: 3915,
};

const Clip = styled.div<{ $h: number }>`
  height: ${(p) => p.$h}px;
  overflow: hidden;
  display: flow-root;
`;

export default function App() {
  return (
    <Page>
      <Global />
      <TitleBlock>
        <Title>미니홈피 쿠폰 발급 방법</Title>
        <TitleRule />
      </TitleBlock>

      <Phone spec={P1}>
        <StatusBar ml={2.5} w={555} h={30} />
        <PageTop t={T1} screenX={36.5} />
        <CouponForm f={F1} screenX={36.5} />
      </Phone>
      <Arrow x={291} mt={54.5} />

      <Phone spec={P2}>
        <StatusBar ml={3.6} w={565} h={31.5} />
        <PageTop t={T2} screenX={28} />
        <CouponForm f={F2} screenX={28} />
        <OptionDialog box={[70, 571, 1608, 1763.6]} screen={P2.screen} barBottom={1316} options={["오픈", "미오픈"]} />
      </Phone>
      <Arrow x={301.5} mt={42.9} />

      <Phone spec={P3}>
        <StatusBar ml={4} w={580} h={32} />
        <PageTop t={T3} screenX={26} />
        <CouponForm f={F3} screenX={26} />
        <OptionDialog box={[67, 577, 2674, 2835.7]} screen={P3.screen} barBottom={2381} options={["쿠폰", "룰렛게임"]} />
      </Phone>
      <Arrow x={301.5} mt={51.4} />

      <Phone spec={P4}>
        <StatusBar ml={3} w={569} h={31} />
        <Clip $h={744}>
          <CouponForm f={F4} screenX={32} />
        </Clip>
      </Phone>
      <Arrow x={307.7} mt={45.5} />

      <Phone spec={P5}>
        <NightStatusBar ml={1} w={572} h={30.5} />
        <PageTop t={T5} screenX={29} />
        <CouponList />
      </Phone>
    </Page>
  );
}
